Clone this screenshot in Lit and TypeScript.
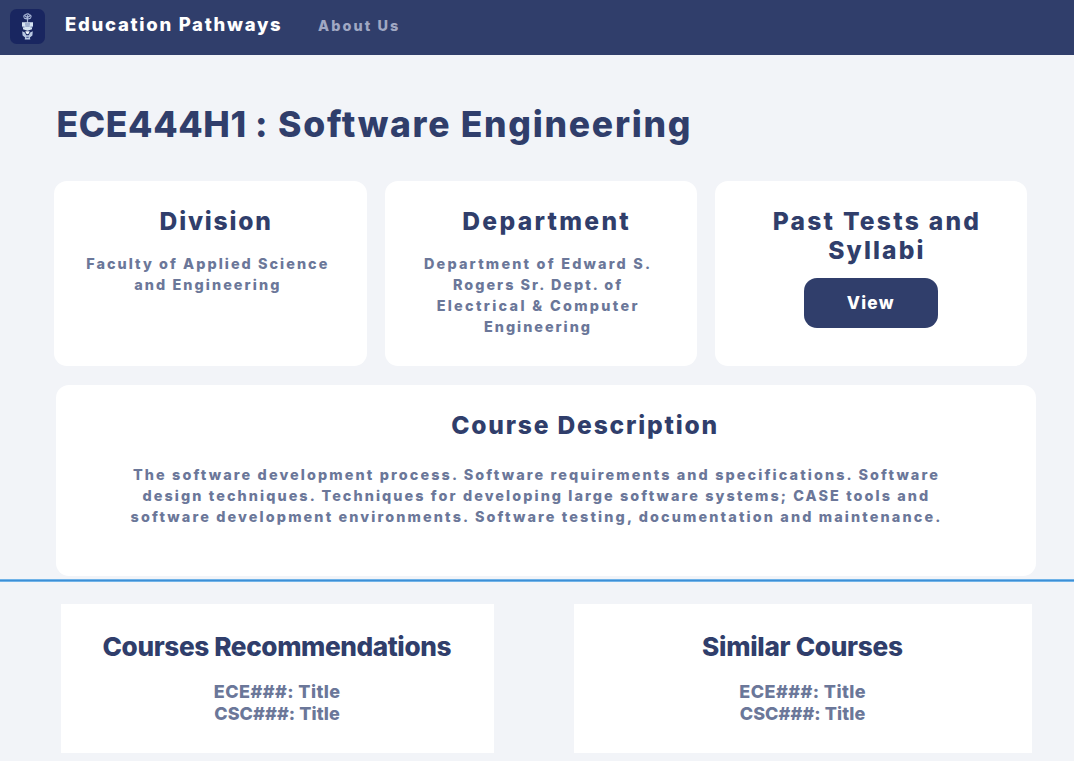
import { LitElement, html, css } from "lit";
import { customElement, property } from "lit/decorators.js";
import { styleMap } from "lit/directives/style-map.js";

/** A line of copy and its tracking in pixels. */
type Line = [text: string, tracking: number];

const lines = (items: Line[]) =>
  items.map(
    ([text, tracking]) =>
      html`<span
        class="line"
        style=${styleMap({ letterSpacing: `${tracking}px`, marginRight: `${-tracking}px` })}
        >${text}</span
      >`
  );

const typography = css`
  * {
    box-sizing: border-box;
  }
  h1, h2, p {
    margin: 0;
    font-size: inherit;
    font-weight: inherit;
  }
  .line {
    display: block;
    white-space: nowrap;
  }
  .heading {
    color: #303e6b;
    font-size: 24.6px;
    line-height: 29px;
  }
  .copy {
    color: #6b7799;
    font-size: 14.4px;
    line-height: 21px;
  }
`;

@customElement("nav-bar")
export class NavBar extends LitElement {
  static styles = [
    typography,
    css`
      :host {
        display: flex;
        height: 54.5px;
        padding-left: 10px;
        background: #303e6b;
      }
      .logo {
        width: 35px;
        height: 35px;
        margin-top: 9px;
      }
      .brand {
        width: 216px;
        margin: 12px 0 0 20px;
        color: #fff;
        font-size: 18.5px;
        line-height: 24px;
      }
      .link {
        margin: 14px 0 0 37px;
        color: #a0a8c3;
        font-size: 14.4px;
        line-height: 24px;
      }
    `,
  ];
  render() {
    return html`
      <svg class="logo" viewBox="0 0 35 35">
        <rect width="35" height="35" rx="6.5" fill="#192660" />
        <g fill="none" stroke="#a9b7d8" stroke-width="1.2" stroke-linecap="round">
          <path d="M14 8.200c-.5-1.500.6-2.500 1.600-2.300.4-1.300 3.200-1.400 3.700 0 1.300 0 2.200 1.200 1.500 2.400M14.500 9.300c1.300.7 4.500.8 5.800-.1M15.600 7.400l1.900 1.100 1.900-1.200M17.500 6.500v6.500" />
        </g>
        <path d="M12 13.200h11v4.500h-1v2.600l-4.500 1.400-4.500-1.400v-2.600h-1z" fill="#d5e3f2" />
        <path d="M15 15h5M15.300 17h4.400M12.300 18h2.200M20.500 18h2.200" stroke="#6d7fb0" stroke-width="1" />
        <path d="M12.200 22.300l2.700 1.300 1.300 2.600h2.600l1.300-2.600 2.700-1.300-.4 4.300-2.500 1.900.4 2h-5.600l.4-2-2.500-1.900z" fill="#b9c8e2" />
        <path d="M15.300 22.300h4.400l-.9 2.100-1.300.8-1.300-.8z" fill="#f0f6fc" />
        <path d="M16.300 28.300h2.400" stroke="#3d4c86" stroke-width="1" />
      </svg>
      <div class="brand">${lines([["Education Pathways", 1.72]])}</div>
      <div class="link">${lines([["About Us", 2.1]])}</div>
    `;
  }
}

@customElement("info-card")
export class InfoCard extends LitElement {
  @property({ attribute: false }) heading: Line[] = [];
  @property({ attribute: false }) copy: Line[] = [];
  static styles = [
    typography,
    css`
      :host {
        display: block;
        box-sizing: border-box;
        height: 185px;
        padding-top: 25.6px;
        border-radius: 13px;
        background: #fff;
        text-align: center;
      }
      .heading {
        padding-left: 9.4px;
      }
      .copy {
        margin-top: 17px;
        padding-right: 7.6px;
      }
    `,
  ];
  render() {
    return html`
      <h2 class="heading">${lines(this.heading)}</h2>
      ${this.copy.length ? html`<p class="copy">${lines(this.copy)}</p>` : html`<slot></slot>`}
    `;
  }
}

@customElement("course-list")
export class CourseList extends LitElement {
  @property({ attribute: false }) heading: Line = ["", 0];
  @property({ attribute: false }) courses: Line[] = [];
  static styles = [
    typography,
    css`
      :host {
        display: block;
        box-sizing: border-box;
        height: 149px;
        padding: 26.5px 1px 0 0;
        background: #fff;
        text-align: center;
      }
      .title {
        color: #303e6b;
        font-size: 26.2px;
        line-height: 32px;
      }
      .items {
        margin-top: 18.5px;
        color: #6b7799;
        font-size: 18px;
        line-height: 22px;
      }
    `,
  ];
  render() {
    return html`
      <h2 class="title">${lines([this.heading])}</h2>
      <p class="items">${lines(this.courses)}</p>
    `;
  }
}

@customElement("app-root")
export class AppRoot extends LitElement {
  static styles = [
    typography,
    css`
      :host {
        display: block;
        height: 761px;
        overflow: hidden;
        background: #f2f4f8;
        font-family: Inter, "Liberation Sans", sans-serif;
        font-weight: 800;
      }
      .course {
        display: flex;
        gap: 10.5px;
        padding: 48.8px 0 0 56.6px;
        color: #303e6b;
        font-size: 35.5px;
        line-height: 44px;
      }
      .cards {
        display: grid;
        grid-template-columns: repeat(3, 312.5px);
        gap: 17.8px;
        margin: 33.7px 0 0 54.3px;
      }
      .view {
        display: block;
        width: 133.5px;
        height: 50px;
        margin: 13px auto 0;
        padding: 0 2px 0 0;
        border: 0;
        border-radius: 13px;
        background: #303e6b;
        color: #fff;
        font: inherit;
        font-size: 17.2px;
        line-height: 50px;
      }
      .description {
        height: 190.6px;
        margin: 19.4px 38px 0 56.3px;
        padding-top: 26px;
        border-radius: 13px;
        background: #fff;
        text-align: center;
      }
      .description .heading {
        padding-left: 76px;
      }
      .description .copy {
        margin-top: 24px;
        padding-right: 21.5px;
      }
      .divider {
        height: 3px;
        margin-top: 3.4px;
        border: solid #71b3e8;
        border-width: 1px 0;
        background: #3d8fd6;
      }
      .lists {
        display: grid;
        grid-template-columns: 433px 458px;
        gap: 80px;
        margin: 22px 0 0 61px;
      }
    `,
  ];
  render() {
    const courses: Line[] = [["ECE###: Title", 0.43], ["CSC###: Title", 0.1]];
    return html`
      <nav-bar></nav-bar>
      <h1 class="course">${lines([["ECE444H1 :", 0.6], ["Software Engineering", 1.72]])}</h1>
      <div class="cards">
        <info-card
          .heading=${[["Division", 1.8]]}
          .copy=${[["Faculty of Applied Science", 2.04], ["and Engineering", 2.08]]}
        ></info-card>
        <info-card
          .heading=${[["Department", 2.3]]}
          .copy=${[
            ["Department of Edward S.", 2.2],
            ["Rogers Sr. Dept. of", 2.02],
            ["Electrical & Computer", 2.32],
            ["Engineering", 1.98],
          ]}
        ></info-card>
        <info-card .heading=${[["Past Tests and", 2.25], ["Syllabi", 2.15]]}>
          <button class="view">${lines([["View", 1.26]])}</button>
        </info-card>
      </div>
      <section class="description">
        <h2 class="heading">${lines([["Course Description", 1.8]])}</h2>
        <p class="copy">
          ${lines([
            ["The software development process. Software requirements and specifications. Software", 2.11],
            ["design techniques. Techniques for developing large software systems; CASE tools and", 2.08],
            ["software development environments. Software testing, documentation and maintenance.", 2.13],
          ])}
        </p>
      </section>
      <div class="divider"></div>
      <div class="lists">
        <course-list .heading=${["Courses Recommendations", -0.4]} .courses=${courses}></course-list>
        <course-list .heading=${["Similar Courses", -0.3]} .courses=${courses}></course-list>
      </div>
    `;
  }
}
